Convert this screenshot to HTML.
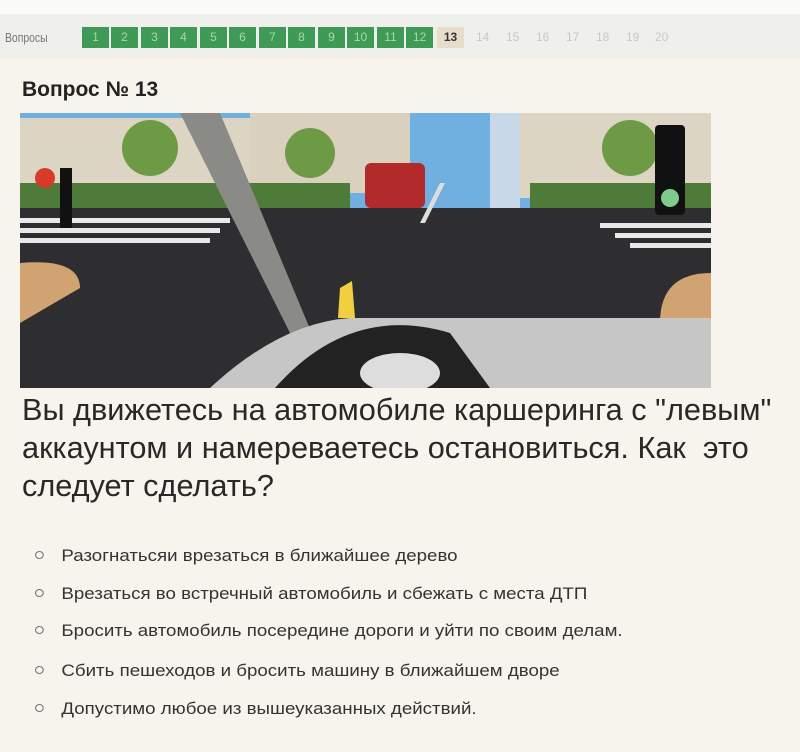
<!DOCTYPE html>
<html><head><meta charset="utf-8"><style>
*{margin:0;padding:0;box-sizing:border-box}
body{width:800px;height:752px;background:#f6f4ed;position:relative;overflow:hidden;font-family:"Liberation Sans","DejaVu Sans",sans-serif;color:#222}
.top{position:absolute;left:0;top:0;width:800px;height:14px;background:#fbfbfa}
.nav{position:absolute;left:0;top:14px;width:800px;height:44px;background:#efefec}
.lbl{position:absolute;left:5px;top:30px;font-size:13px;color:#777;transform:scaleX(.8);transform-origin:left}
.b{position:absolute;top:27px;width:27px;height:21px;background:#3f9a55;color:#a8d8b0;font-size:12px;text-align:center;line-height:21px}
.g{position:absolute;top:27px;font-size:12px;color:#c8c8c8;line-height:21px}
.h{position:absolute;left:22px;top:78px;font-size:21px;font-weight:bold;color:#222}
.q{position:absolute;left:22px;font-size:31px;line-height:34px;color:#282828;white-space:nowrap;transform-origin:left top}
.a{position:absolute;left:35px;font-size:17px;color:#333;white-space:nowrap;transform-origin:left top;transform:scaleX(1.1)}
.a span{display:inline-block;width:8px;height:8px;border:1.5px solid #777;border-radius:50%;margin-right:16px;vertical-align:2px}
</style></head><body>
<div class="top"></div><div class="nav"></div>
<div class="lbl">Вопросы</div>
<div class="b" style="left:82px">1</div><div class="b" style="left:111px">2</div><div class="b" style="left:141px">3</div><div class="b" style="left:170px">4</div><div class="b" style="left:200px">5</div><div class="b" style="left:229px">6</div><div class="b" style="left:259px">7</div><div class="b" style="left:288px">8</div><div class="b" style="left:318px">9</div><div class="b" style="left:347px">10</div><div class="b" style="left:377px">11</div><div class="b" style="left:406px">12</div>
<div class="b" style="left:437px;background:#e8dccb;color:#333;font-weight:bold">13</div>
<div class="g" style="left:476px">14</div><div class="g" style="left:506px">15</div><div class="g" style="left:536px">16</div><div class="g" style="left:566px">17</div><div class="g" style="left:596px">18</div><div class="g" style="left:626px">19</div><div class="g" style="left:655px">20</div>
<div class="h">Вопрос № 13</div>
<svg style="position:absolute;left:20px;top:113px" width="691" height="275" viewBox="0 0 691 275">
<rect width="691" height="275" fill="#2b2b2d"/>
<rect width="691" height="100" fill="#6fb0e0"/>
<rect x="0" y="5" width="230" height="85" fill="#ddd5c4"/>
<rect x="230" y="0" width="160" height="80" fill="#d9d0bd"/>
<rect x="500" y="0" width="191" height="85" fill="#ddd5c4"/>
<rect x="470" y="0" width="30" height="100" fill="#c8d8e8"/>
<circle cx="130" cy="35" r="28" fill="#6e9a45"/><circle cx="290" cy="40" r="25" fill="#6e9a45"/><circle cx="610" cy="35" r="28" fill="#6e9a45"/>
<rect x="0" y="70" width="330" height="28" fill="#4e7a3a"/><rect x="510" y="70" width="181" height="28" fill="#4e7a3a"/>
<rect x="0" y="95" width="691" height="180" fill="#2e2e30"/>
<g fill="#e8e8e8"><rect x="0" y="105" width="210" height="5"/><rect x="0" y="115" width="200" height="5"/><rect x="0" y="125" width="190" height="5"/><rect x="580" y="110" width="111" height="5"/><rect x="595" y="120" width="96" height="5"/><rect x="610" y="130" width="81" height="5"/></g>
<path d="M0 150 Q60 145 60 175 L0 210Z" fill="#d1a373"/><path d="M691 160 Q640 160 640 210 L691 215Z" fill="#d1a373"/>
<rect x="345" y="50" width="60" height="45" rx="6" fill="#b22a2a"/>
<path d="M400 110 L420 70 L425 70 L405 110Z" fill="#ddd"/>
<rect x="635" y="12" width="30" height="90" rx="4" fill="#111"/><circle cx="650" cy="85" r="9" fill="#7ecb8a"/>
<rect x="40" y="55" width="12" height="60" fill="#111"/><circle cx="25" cy="65" r="10" fill="#d83a2a"/>
<path d="M160 0 L200 0 L300 240 L290 260 Z" fill="#8a8a86"/>
<path d="M190 275 Q260 210 330 205 L691 205 L691 275Z" fill="#c6c6c6"/>
<path d="M255 275 Q330 190 430 220 L470 275Z" fill="#222"/>
<ellipse cx="380" cy="260" rx="40" ry="20" fill="#ddd"/>
<path d="M320 175 L332 168 L335 205 L318 205 Z" fill="#f0d040"/>
</svg>
<div class="q" style="top:393px;transform:scaleX(.99)">Вы движетесь на автомобиле каршеринга с "левым"</div>
<div class="q" style="top:431px;transform:scaleX(.99)">аккаунтом и намереваетесь остановиться. Как &nbsp;это</div>
<div class="q" style="top:469px;transform:scaleX(.99)">следует сделать?</div>
<div class="a" style="top:546px"><span></span>Разогнатьсяи врезаться в ближайшее дерево</div>
<div class="a" style="top:584px"><span></span>Врезаться во встречный автомобиль и сбежать с места ДТП</div>
<div class="a" style="top:621px"><span></span>Бросить автомобиль посередине дороги и уйти по своим делам.</div>
<div class="a" style="top:661px"><span></span>Сбить пешеходов и бросить машину в ближайшем дворе</div>
<div class="a" style="top:699px"><span></span>Допустимо любое из вышеуказанных действий.</div>
</body></html>
